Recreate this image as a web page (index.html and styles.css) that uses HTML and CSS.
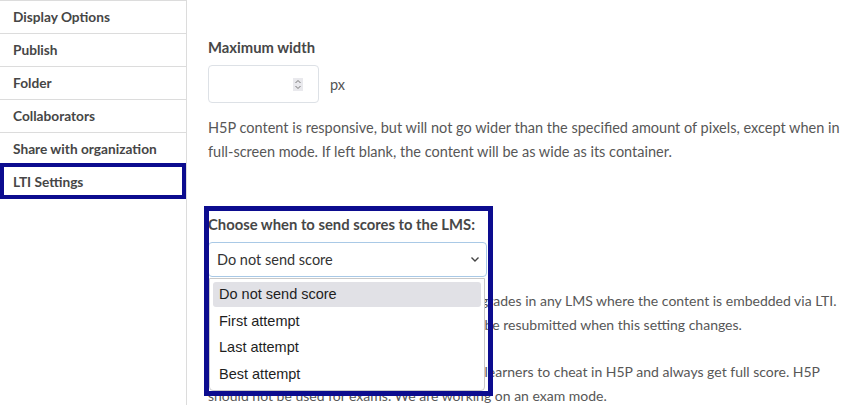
FILE: index.html
```html
<!DOCTYPE html>
<html lang="en">
<head>
<meta charset="utf-8">
<title>LTI Settings</title>
<link rel="stylesheet" href="styles.css">
</head>
<body>
<div class="page">
  <nav class="sidebar">
    <div class="nav-item">Display Options</div>
    <div class="nav-item">Publish</div>
    <div class="nav-item">Folder</div>
    <div class="nav-item">Collaborators</div>
    <div class="nav-item">Share with organization</div>
    <div class="nav-item active">LTI Settings</div>
  </nav>
  <main class="main">
    <div class="field-label first">Maximum width</div>
    <div class="input-row">
      <div class="num-input">
        <span class="spinner">
          <svg width="10" height="13" viewBox="0 0 10 13"><path d="M2.5 5 L5 2.5 L7.5 5" fill="none" stroke="#777" stroke-width="1"/><path d="M2.5 8 L5 10.5 L7.5 8" fill="none" stroke="#777" stroke-width="1"/></svg>
        </span>
      </div>
      <span class="unit">px</span>
    </div>
    <p class="help">H5P content is responsive, but will not go wider than the specified amount of pixels, except when in<br>full-screen mode. If left blank, the content will be as wide as its container.</p>

    <div class="lti-field">
      <div class="field-label">Choose when to send scores to the LMS:</div>
      <div class="select">
        <span>Do not send score</span>
        <svg class="chev" width="10" height="7" viewBox="0 0 10 7"><path d="M1.5 1.5 L5 5 L8.5 1.5" fill="none" stroke="#444" stroke-width="1.4"/></svg>
      </div>
      <ul class="dropdown">
        <li class="opt selected">Do not send score</li>
        <li class="opt">First attempt</li>
        <li class="opt">Last attempt</li>
        <li class="opt">Best attempt</li>
      </ul>
      <div class="annotation"></div>
    </div>
    <p class="help small after-select">This setting decides when scores are sent as grades in any LMS where the content is embedded via LTI.<br>Scores which have already been sent will not be resubmitted when this setting changes.</p>
    <p class="help small note">It is currently still possible for the tech-savvy learners to cheat in H5P and always get full score. H5P<br>should not be used for exams. We are working on an exam mode.</p>
  </main>
</div>
</body>
</html>
```
FILE: styles.css
```css
* { box-sizing: border-box; }
body {
  margin: 0;
  font-family: Lato, "Open Sans", sans-serif;
  color: #555;
  background: #fff;
}
.page {
  display: flex;
  height: 405px;
  overflow: hidden;
}
.sidebar {
  flex: none;
  width: 187px;
  border-right: 1px solid #dcdcdc;
  border-top: 1px solid #dcdcdc;
}
.nav-item {
  height: 33px;
  border-bottom: 1px solid #dcdcdc;
  display: flex;
  align-items: center;
  padding-left: 13px;
  padding-bottom: 1px;
  font-size: 13.7px;
  font-weight: 700;
  color: #464646;
}
.nav-item.active {
  margin-top: -3px;
  height: 36px;
  width: 186px;
  border: 4px solid #0c0c8f;
  padding-left: 9px;
  padding-top: 2px;
}
.main {
  flex: 1;
  min-width: 0;
  padding-left: 21px;
}
.field-label {
  font-size: 14.8px;
  font-weight: 700;
  color: #474747;
  line-height: 20px;
  white-space: nowrap;
}
.field-label.first { margin-top: 37px; }
.input-row {
  display: flex;
  align-items: center;
  margin-top: 8px;
}
.num-input {
  width: 111px;
  height: 38px;
  border: 1px solid #dde1e6;
  border-radius: 4px;
  display: flex;
  align-items: center;
  justify-content: flex-end;
  padding-right: 15px;
}
.spinner {
  display: block;
  width: 10px;
  height: 13px;
  background: #e9e9ed;
}
.spinner svg { display: block; }
.unit {
  margin-left: 11px;
  font-size: 14.5px;
  color: #555;
}
.help {
  margin: 0;
  font-size: 14.5px;
  line-height: 24px;
  color: #575757;
  white-space: nowrap;
}
.help.small { font-size: 14px; }
.input-row + .help { margin-top: 13px; }
.lti-field {
  position: relative;
  margin-top: 50px;
  width: 279px;
}
.select {
  margin-top: 8px;
  height: 35px;
  border: 1px solid #a9c9e6;
  border-radius: 4px;
  display: flex;
  align-items: center;
  justify-content: space-between;
  padding: 0 6px 0 8px;
  font-size: 14.5px;
  color: #333;
}
.chev { display: block; }
.dropdown {
  position: absolute;
  left: 1px;
  top: 64px;
  width: 276px;
  height: 113px;
  margin: 0;
  padding: 3px;
  list-style: none;
  background: #fff;
  border: 1px solid #c9c9c9;
  border-radius: 0 0 4px 4px;
  font-family: "Liberation Sans", Arial, sans-serif;
  font-size: 14.5px;
  color: #1e1e1e;
  z-index: 2;
}
.opt {
  height: 26.3px;
  line-height: 26px;
  padding-left: 6px;
  border-radius: 3px;
}
.opt.selected { background: #e1e1e6; height: 25px; line-height: 25px; margin-bottom: 1px; }
.annotation {
  position: absolute;
  left: -4px;
  top: -8px;
  width: 289px;
  height: 190px;
  border: 5px solid #0c0c8f;
  pointer-events: none;
  z-index: 3;
}
.after-select { margin-top: 12px; }
.note { margin-top: 23px; }
```
